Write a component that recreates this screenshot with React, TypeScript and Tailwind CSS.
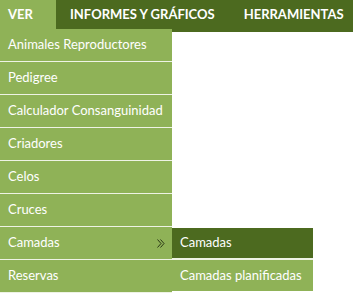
import React from 'react'

const items = [
  'Animales Reproductores',
  'Pedigree',
  'Calculador Consanguinidad',
  'Criadores',
  'Celos',
  'Cruces',
  'Camadas',
  'Reservas',
]

function Chevrons() {
  return (
    <svg width="8" height="9" viewBox="0 0 8 9" fill="none" stroke="#1f2a10" strokeWidth="0.9">
      <path d="M0.5 0.5 L4 4.5 L0.5 8.5" />
      <path d="M3.5 0.5 L7 4.5 L3.5 8.5" />
    </svg>
  )
}

export default function App() {
  return (
    <div className="relative h-[293px] w-[353px] overflow-hidden bg-white font-['Lato','Noto_Sans',sans-serif] text-[13px] text-white">
      <nav className="flex h-[32px] bg-[#4c6a1f] font-bold uppercase">
        <div className="flex h-[29px] w-[56px] items-center bg-[#8fb257] pl-[8px]">Ver</div>
        <div className="flex h-[29px] items-center pl-[14px]">Informes y gráficos</div>
        <div className="flex h-[29px] items-center pl-[29px]">Herramientas</div>
      </nav>

      {/* dropdown */}
      <ul className="absolute left-0 top-[29px] w-[172px]">
        {items.map((label) => (
          <li
            key={label}
            className="relative flex h-[33px] items-center justify-between border-b border-[#eef3e4] bg-[#8fb257] pl-[8px] pr-[7px]"
          >
            <span>{label}</span>
            {label === 'Camadas' && (
              <>
                <Chevrons />
                <ul className="absolute left-[172px] top-[1px] w-[141px]">
                  <li className="flex h-[30px] items-center bg-[#4c6a1f] pl-[8px]">Camadas</li>
                  <li className="h-[2px] bg-[#eef3e4]" />
                  <li className="flex h-[31px] items-center bg-[#8fb257] pl-[8px]">Camadas planificadas</li>
                </ul>
              </>
            )}
          </li>
        ))}
      </ul>
    </div>
  )
}
